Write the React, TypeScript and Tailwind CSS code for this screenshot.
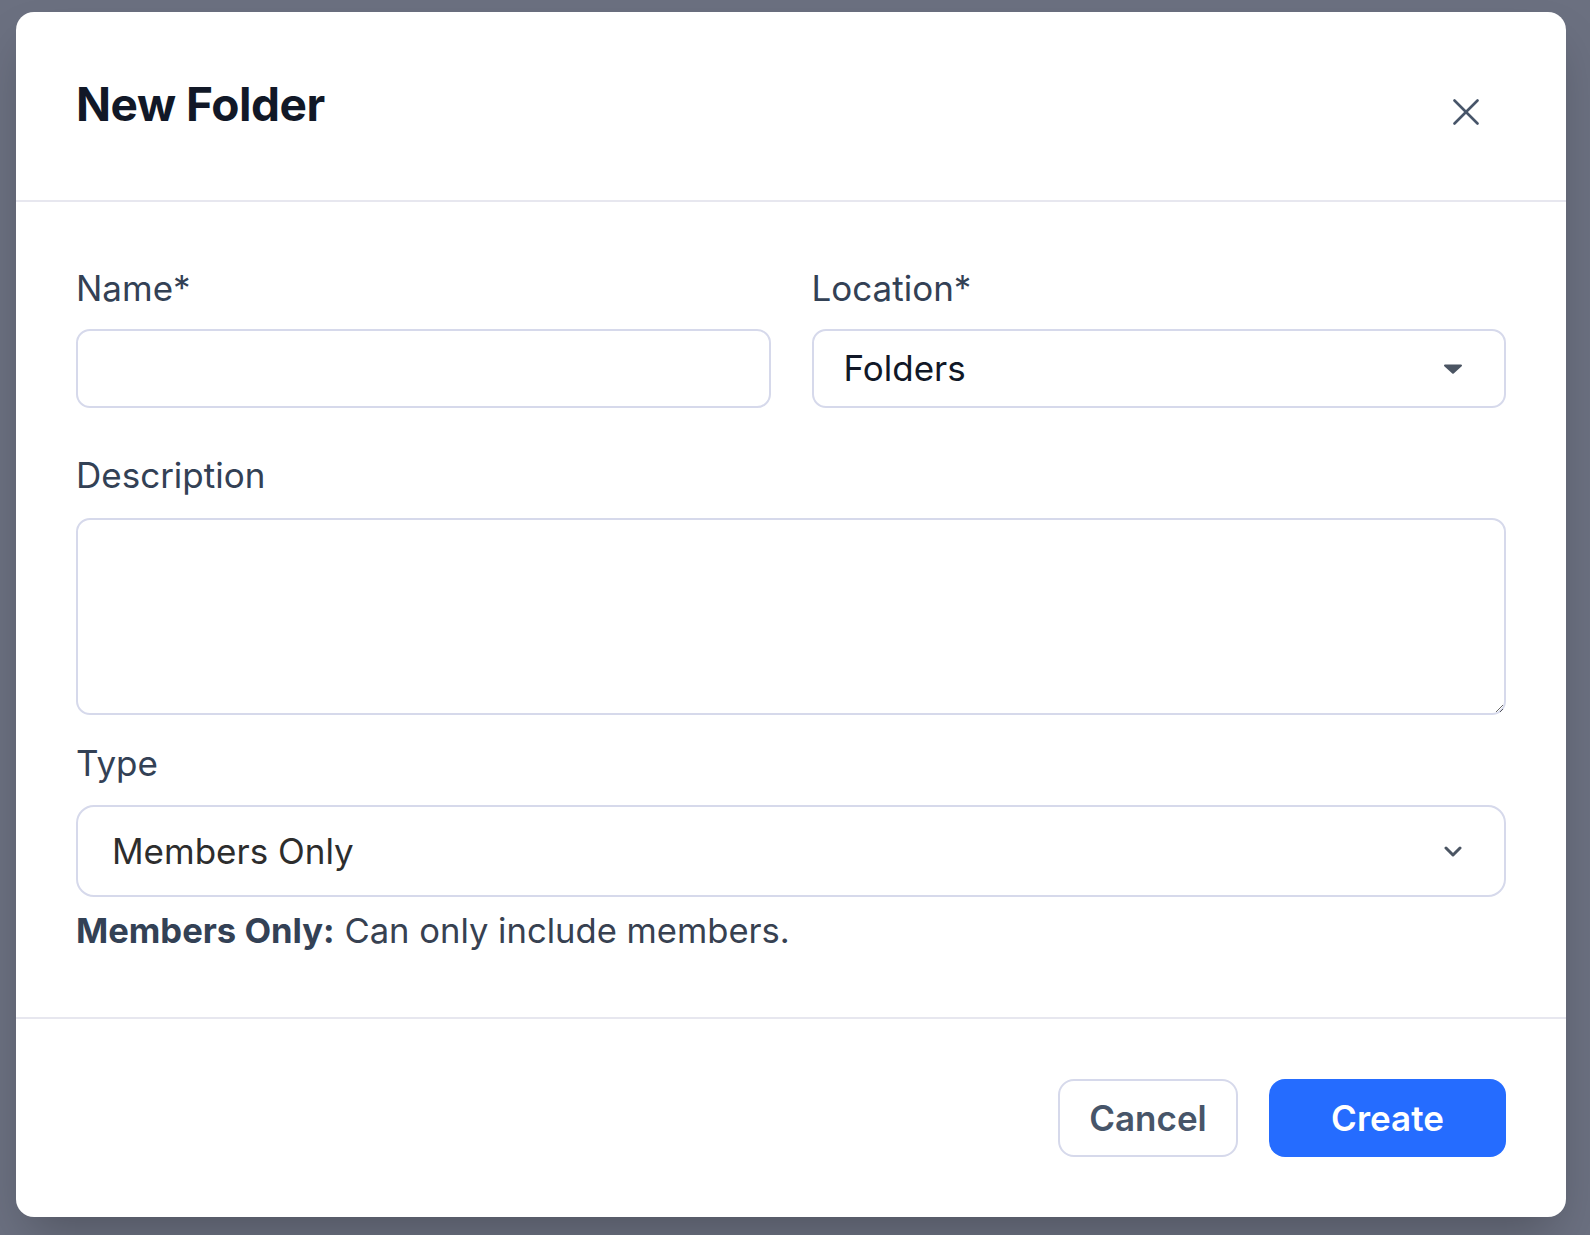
import { useState } from 'react';

export default function App() {
  const [name, setName] = useState('');
  const [description, setDescription] = useState('');

  return (
    <div className="min-h-screen bg-[#6b7080] pt-[12px] pl-[16px] font-['Inter',sans-serif]">
      <div className="w-[1550px] bg-white rounded-[18px] shadow-2xl overflow-hidden">
        {/* header */}
        <div className="h-[190px] flex items-center justify-between px-[60px] border-b-2 border-[#e7e7ef]">
          <h1 className="text-[46px] leading-[58px] font-bold tracking-[-0.01em] text-[#111827] -mt-[4px]">New Folder</h1>
          <button className="mr-[27px] mt-[12px] text-[#475569]">
            <svg width="26" height="26" viewBox="0 0 26 26" fill="none" stroke="currentColor" strokeWidth="2.6" strokeLinecap="round">
              <line x1="1.5" y1="1.5" x2="24.5" y2="24.5" />
              <line x1="24.5" y1="1.5" x2="1.5" y2="24.5" />
            </svg>
          </button>
        </div>

        {/* body */}
        <div className="px-[60px] pt-[61px] pb-[61px]">
          <div className="grid grid-cols-2 gap-x-[41px]">
            <div>
              <label className="block text-[35px] leading-[51px] text-[#334155]">Name*</label>
              <input
                value={name}
                onChange={(e) => setName(e.target.value)}
                className="mt-[15px] w-full h-[79px] border-2 border-[#d6d9eb] rounded-[14px] px-[30px] text-[35px] text-[#111827] outline-none"
              />
            </div>
            <div>
              <label className="block text-[35px] leading-[51px] text-[#334155]">Location*</label>
              <div className="mt-[15px] w-full h-[79px] border-2 border-[#d6d9eb] rounded-[14px] pl-[30px] pr-[42px] flex items-center justify-between">
                <span className="text-[35px] text-[#111827]">Folders</span>
                <svg width="18" height="10" viewBox="0 0 18 10">
                  <path d="M1 0.5 H17 a1 1 0 0 1 0.7 1.7 L9.7 9.4 a1 1 0 0 1 -1.4 0 L0.3 2.2 A1 1 0 0 1 1 0.5 Z" fill="#4b5563" />
                </svg>
              </div>
            </div>
          </div>

          <label className="block mt-[42px] text-[35px] leading-[51px] text-[#334155]">Description</label>
          <textarea
            value={description}
            onChange={(e) => setDescription(e.target.value)}
            className="block mt-[17px] w-full h-[197px] border-2 border-[#d6d9eb] rounded-[14px] px-[30px] py-[20px] text-[35px] text-[#111827] outline-none"
          />

          <label className="block mt-[23px] text-[35px] leading-[51px] text-[#334155]">Type</label>
          <div className="mt-[16px] w-full h-[92px] border-2 border-[#d6d9eb] rounded-[18px] pl-[34px] pr-[42px] flex items-center justify-between">
            <span className="text-[35px] text-[#2d2d2d]">Members Only</span>
            <svg width="18" height="11" viewBox="0 0 18 11" fill="none" stroke="#4b5563" strokeWidth="3" strokeLinecap="round" strokeLinejoin="round">
              <polyline points="2,2 9,9 16,2" />
            </svg>
          </div>

          <p className="mt-[8px] text-[34.6px] leading-[51px] text-[#374151]">
            <span className="font-bold text-[#334155]">Members Only:</span> Can only include members.
          </p>
        </div>

        {/* footer */}
        <div className="border-t-2 border-[#e7e7ef] px-[60px] pt-[60px] pb-[60px] flex justify-end gap-[31px]">
          <button className="h-[78px] w-[180px] rounded-[16px] border-2 border-[#d6d9eb] bg-white text-[35px] font-semibold text-[#475569]">
            Cancel
          </button>
          <button className="h-[78px] w-[237px] rounded-[16px] bg-[#256cff] text-[35px] font-semibold text-white">
            Create
          </button>
        </div>
      </div>
    </div>
  );
}
